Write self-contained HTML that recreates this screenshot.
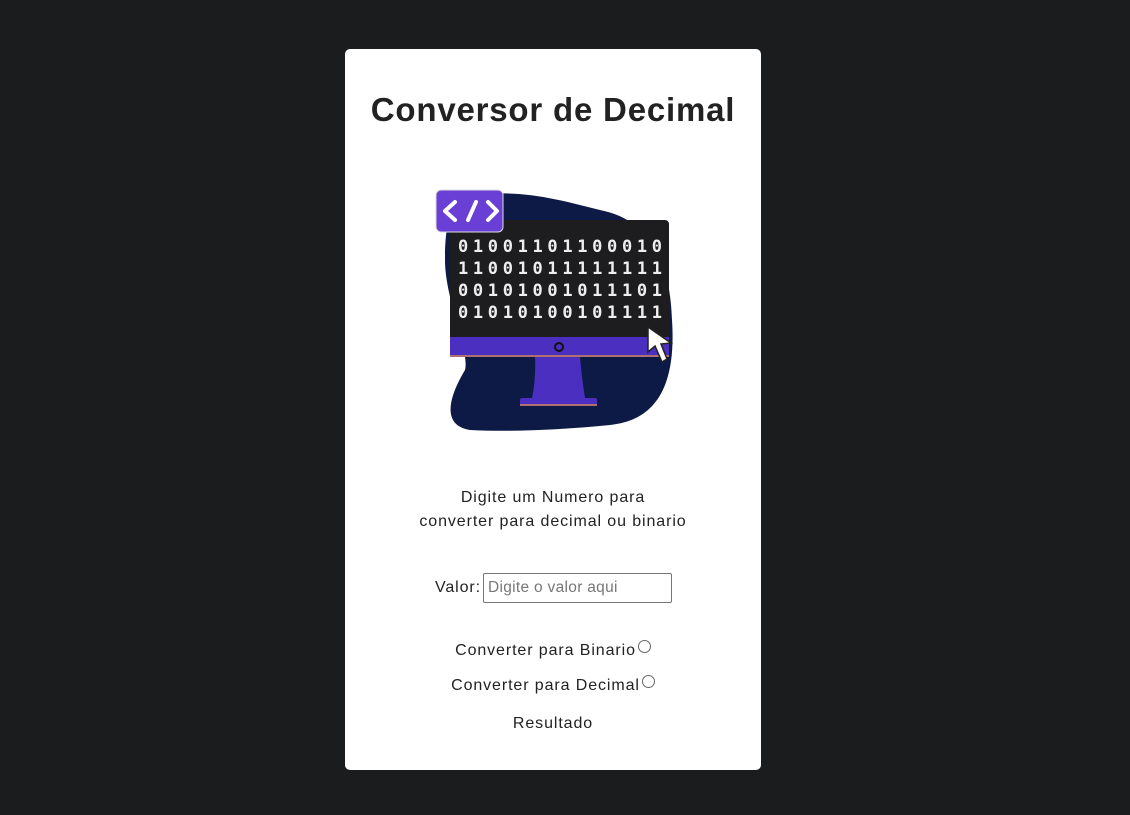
<!DOCTYPE html>
<html><head><style>
body{margin:0;background:#1b1c1e;width:1130px;height:815px;font-family:"Liberation Sans",sans-serif;color:#222;}
.card{position:absolute;left:345px;top:49px;width:416px;height:721px;background:#fff;border-radius:5px;}
h1{position:absolute;left:0;width:416px;top:42px;margin:0;text-align:center;font-size:33px;font-weight:bold;color:#222;letter-spacing:0.8px;}
.t{position:absolute;left:0;width:416px;text-align:center;font-size:16px;color:#222;letter-spacing:0.9px;}
input{position:absolute;left:138px;top:524px;width:189px;height:30px;box-sizing:border-box;border:1px solid #777;border-radius:2px;font-size:15.5px;padding:2px 4px;font-family:"Liberation Sans",sans-serif;letter-spacing:0.3px;}
input::placeholder{color:#777;}
.r{display:inline-block;width:11px;height:11px;border:1px solid #666;border-radius:50%;vertical-align:2px;margin-left:2px;}
svg text{font-family:"DejaVu Sans Mono","Liberation Mono",monospace;font-weight:bold;fill:#eee;}
</style></head><body>
<div class="card">
<h1>Conversor de Decimal</h1>
<svg style="position:absolute;left:75px;top:131px" width="270" height="260" viewBox="420 180 270 260">
<path d="M470 196 C520 188 560 200 600 210 C650 220 670 260 672 320 C676 380 660 420 610 425 C560 430 510 432 470 430 C440 425 450 395 465 370 C470 350 445 300 445 260 C445 225 450 200 470 196Z" fill="#0d1a45"/>
<rect x="450" y="220" width="219" height="136" rx="4" fill="#1d1d1f"/>
<rect x="450" y="337" width="219" height="19" fill="#4a2fc0"/>
<rect x="450" y="355" width="219" height="2" fill="#b07070"/>
<circle cx="559" cy="347" r="4" fill="none" stroke="#111" stroke-width="2"/>
<path d="M535 357 L580 357 Q582 380 585 398 L532 398 Q536 380 535 357Z" fill="#4a2fc0"/>
<rect x="520" y="398" width="77" height="7" rx="2" fill="#4a2fc0"/>
<rect x="520" y="404" width="77" height="2" fill="#b07070"/>
<rect x="436" y="190" width="67" height="42" rx="5" fill="#6a3fd6" stroke="#ddd" stroke-width="1"/>
<path d="M455 202 L445 211 L455 220 M468 220 L476 202 M488 202 L497 211 L488 220" fill="none" stroke="#fff" stroke-width="4" stroke-linecap="round" stroke-linejoin="round"/>
<g font-size="17">
<text x="458" y="252" textLength="204">01001101100010</text>
<text x="458" y="274" textLength="204">11001011111111</text>
<text x="458" y="296" textLength="204">00101001011101</text>
<text x="458" y="318" textLength="204">01010100101111</text>
</g>
<path d="M648 327 L648 352 L655 346 L662 362 L667 359 L661 344 L671 343Z" fill="#fff" stroke="#222" stroke-width="1.5"/>
</svg>
<div class="t" style="top:437px;line-height:24px">Digite um Numero para<br>converter para decimal ou binario</div>
<div class="t" style="top:530px;left:-158px;width:294px;text-align:right;padding:0">Valor:</div>
<input placeholder="Digite o valor aqui">
<div class="t" style="top:591px">Converter para Binario<span class="r"></span></div>
<div class="t" style="top:626px">Converter para Decimal<span class="r"></span></div>
<div class="t" style="top:666px">Resultado</div>
</div>
</body></html>
